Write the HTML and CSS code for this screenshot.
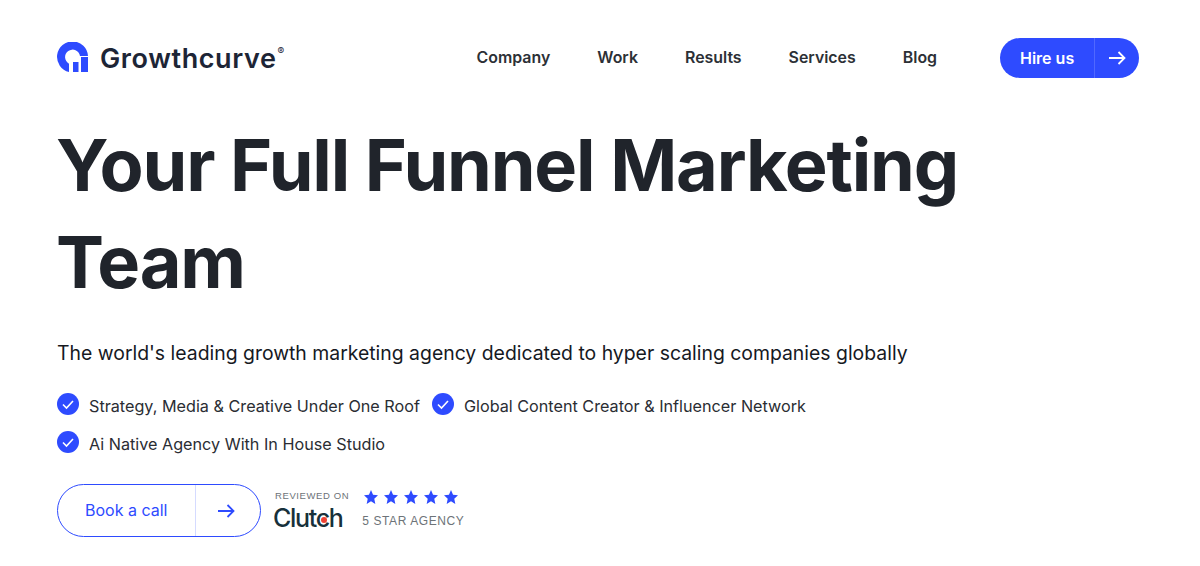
FILE: index.html
```html
<!DOCTYPE html>
<html lang="en">
<head>
  <meta charset="UTF-8" />
  <meta name="viewport" content="width=device-width, initial-scale=1.0"/>
  <title>Growthcurve</title>
  <link rel="stylesheet" href="styles.css">
</head>
<body>
  <header class="header">
    <a class="logo" href="#">
      <svg class="logo-mark" width="31" height="30" viewBox="0 0 31 30" fill="#2e4bff">
        <path d="M12 30A15.5 15.5 0 1 1 31 14H23A7.5 7.5 0 1 0 12 21.7Z"/>
        <path d="M16 20H21.500V30H16Z"/>
        <path d="M24 15H31V30H24Z"/>
      </svg>
      <span class="logo-text">Growthcurve</span><sup class="logo-reg">®</sup>
    </a>
    <nav class="nav">
      <a href="#">Company</a>
      <a href="#">Work</a>
      <a href="#">Results</a>
      <a href="#">Services</a>
      <a href="#">Blog</a>
    </nav>
    <a class="hire" href="#">
      <span class="hire-label">Hire us</span>
      <span class="hire-arrow">
        <svg width="18" height="14" viewBox="0 0 18 14" fill="none" stroke="#fff" stroke-width="1.8"><path d="M1 7H16.500M10.500 1L16.500 7L10.500 13"/></svg>
      </span>
    </a>
  </header>

  <main class="hero">
    <h1>Your Full Funnel Marketing<br>Team</h1>
    <p class="lead">The world's leading growth marketing agency dedicated to hyper scaling companies globally</p>
    <ul class="checks">
      <li>
        <svg width="22" height="22" viewBox="0 0 22 22"><circle cx="11" cy="11" r="11" fill="#2e4bff"/><path d="M6 11.500L9.500 15L16 8" fill="none" stroke="#fff" stroke-width="1.6"/></svg>
        Strategy, Media &amp; Creative Under One Roof
      </li>
      <li>
        <svg width="22" height="22" viewBox="0 0 22 22"><circle cx="11" cy="11" r="11" fill="#2e4bff"/><path d="M6 11.500L9.500 15L16 8" fill="none" stroke="#fff" stroke-width="1.6"/></svg>
        Global Content Creator &amp; Influencer Network
      </li>
      <li>
        <svg width="22" height="22" viewBox="0 0 22 22"><circle cx="11" cy="11" r="11" fill="#2e4bff"/><path d="M6 11.500L9.500 15L16 8" fill="none" stroke="#fff" stroke-width="1.6"/></svg>
        Ai Native Agency With In House Studio
      </li>
    </ul>
    <div class="cta-row">
      <a class="book" href="#">
        <span class="book-label">Book a call</span>
        <span class="book-arrow">
          <svg width="18" height="14" viewBox="0 0 18 14" fill="none" stroke="#2e4bff" stroke-width="1.8"><path d="M1 7H16.500M10.500 1L16.500 7L10.500 13"/></svg>
        </span>
      </a>
      <div class="clutch">
        <div class="clutch-left">
          <span class="small-caps">REVIEWED ON</span>
          <span class="clutch-name">Clutch<i class="clutch-dot"></i></span>
        </div>
        <div class="clutch-right">
          <div class="stars">
            <svg width="14" height="14" viewBox="0 0 24 24"><path d="M12 0L15.500 8.300L24 9.200L17.600 15.100L19.400 24L12 19.400L4.600 24L6.400 15.100L0 9.200L8.500 8.300Z"/></svg>
            <svg width="14" height="14" viewBox="0 0 24 24"><path d="M12 0L15.500 8.300L24 9.200L17.600 15.100L19.400 24L12 19.400L4.600 24L6.400 15.100L0 9.200L8.500 8.300Z"/></svg>
            <svg width="14" height="14" viewBox="0 0 24 24"><path d="M12 0L15.500 8.300L24 9.200L17.600 15.100L19.400 24L12 19.400L4.600 24L6.400 15.100L0 9.200L8.500 8.300Z"/></svg>
            <svg width="14" height="14" viewBox="0 0 24 24"><path d="M12 0L15.500 8.300L24 9.200L17.600 15.100L19.400 24L12 19.400L4.600 24L6.400 15.100L0 9.200L8.500 8.300Z"/></svg>
            <svg width="14" height="14" viewBox="0 0 24 24"><path d="M12 0L15.500 8.300L24 9.200L17.600 15.100L19.400 24L12 19.400L4.600 24L6.400 15.100L0 9.200L8.500 8.300Z"/></svg>
          </div>
          <span class="small-caps big">5 STAR AGENCY</span>
        </div>
      </div>
    </div>
  </main>
</body>
</html>
```

FILE: styles.css
```css
* {
  box-sizing: border-box;
}
body {
  margin: 0;
  background: #fff;
  color: #20242b;
  font-family: "Inter", "Liberation Sans", sans-serif;
  height: 566px;
  overflow: hidden;
}
a {
  color: inherit;
  text-decoration: none;
}
.header {
  display: flex;
  align-items: center;
  padding: 38px 61px 0 57px;
}
.logo {
  display: flex;
  align-items: center;
  color: #1d2536;
}
.logo-mark {
  margin-top: -2px;
}
.logo-text {
  margin-left: 12px;
  font-size: 27px;
  font-weight: 600;
  letter-spacing: 0.6px;
}
.logo-reg {
  align-self: flex-start;
  margin: 3px 0 0 1px;
  font-size: 10px;
  line-height: 12px;
}
.nav {
  display: flex;
  gap: 47px;
  margin-left: auto;
  margin-right: 63px;
  padding-bottom: 2px;
  font-size: 15.9px;
  font-weight: 600;
  color: #2c3036;
}
.hire {
  display: flex;
  width: 139px;
  height: 40px;
  border-radius: 20px;
  background: #2e4bff;
  color: #fff;
  font-size: 16px;
  font-weight: 600;
}
.hire-label {
  flex: 1;
  align-self: center;
  padding-left: 20px;
}
.hire-arrow {
  display: flex;
  align-items: center;
  justify-content: center;
  width: 45px;
  border-left: 1px solid #5068ff;
}
.hero {
  padding: 0 58px;
}
h1 {
  margin: 38px 0 0 -2px;
  font-size: 72px;
  line-height: 97px;
  font-weight: 700;
  letter-spacing: -1.2px;
  color: #20242b;
}
.lead {
  margin: 29px 0 0 -1px;
  font-size: 19.4px;
  line-height: 28px;
  color: #16191f;
}
.checks {
  display: flex;
  flex-wrap: wrap;
  column-gap: 12px;
  row-gap: 16px;
  width: 800px;
  margin: 28px 0 0 -1px;
  padding: 0;
  list-style: none;
  font-size: 16.2px;
  line-height: 22px;
  color: #2a2d33;
}
.checks li {
  display: flex;
  align-items: flex-start;
  gap: 10px;
}
.checks svg {
  margin-top: -2px;
}
.cta-row {
  display: flex;
  align-items: center;
  margin-top: 29px;
}
.book {
  display: flex;
  width: 204px;
  height: 53px;
  margin-left: -1px;
  border: 1.5px solid #2e4bff;
  border-radius: 27px;
  color: #2e4bff;
  font-size: 16px;
}
.book-label {
  flex: 1;
  align-self: center;
  padding: 0 0 2px 27px;
}
.book-arrow {
  display: flex;
  align-items: center;
  justify-content: center;
  width: 65px;
  padding-right: 4px;
  border-left: 1px solid #d5dbff;
}
.clutch {
  display: flex;
  gap: 13px;
  margin-left: 14px;
  padding-top: 2px;
}
.clutch-left,
.clutch-right {
  display: flex;
  flex-direction: column;
}
.small-caps {
  font-family: "Liberation Sans", sans-serif;
  font-size: 9.5px;
  letter-spacing: 0.6px;
  color: #6d7378;
}
.small-caps.big {
  font-size: 12px;
  margin-top: 10px;
}
.clutch-name {
  position: relative;
  margin: 2px 0 0 -2px;
  font-size: 25px;
  font-weight: 500;
  line-height: 30px;
  letter-spacing: -1.3px;
  color: #17313b;
}
.clutch-dot {
  position: absolute;
  left: 48px;
  top: 14px;
  width: 6px;
  height: 6px;
  border-radius: 50%;
  background: #ef4335;
}
.stars {
  display: flex;
  gap: 6px;
  padding-left: 2px;
  fill: #2e4bff;
}
```
